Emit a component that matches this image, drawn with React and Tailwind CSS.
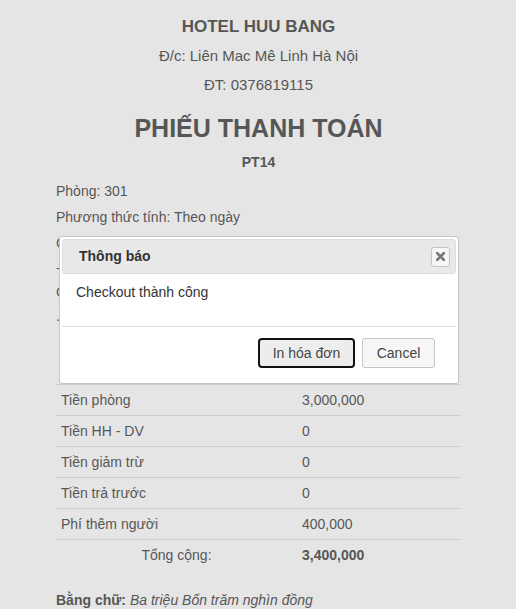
import React from 'react';

const rows = [
    { label: 'Tiền phòng', value: '3,000,000' },
    { label: 'Tiền HH - DV', value: '0' },
    { label: 'Tiền giảm trừ', value: '0' },
    { label: 'Tiền trả trước', value: '0' },
    { label: 'Phí thêm người', value: '400,000' },
];

export default function App() {
    return (
        <div className="h-screen overflow-hidden bg-white text-[#333] font-['Liberation_Sans',Arial,sans-serif] text-[14px]">
            <div className="w-[405px] ml-[56px]">
                {/* Header */}
                <div className="text-center">
                    <h1 className="pt-[15px] h-[39px] leading-[24px] text-[17px] font-bold">HOTEL HUU BANG</h1>
                    <p className="mt-[5px] leading-[24px] text-[15px]">Đ/c: Liên Mac Mê Linh Hà Nội</p>
                    <p className="mt-[5px] leading-[24px] text-[15px]">ĐT: 0376819115</p>
                    <h2 className="mt-[16px] leading-[30px] text-[25px] font-bold">PHIẾU THANH TOÁN</h2>
                    <p className="mt-[9px] leading-[20px] font-bold">PT14</p>
                </div>

                {/* Info */}
                <div className="mt-[6px]">
                    <p className="leading-[26px]">Phòng: 301</p>
                    <p className="leading-[26px]">Phương thức tính: Theo ngày</p>
                    <p className="leading-[26px]">Giờ vào: 10:00 01/05/2023</p>
                    <p className="leading-[24px]">- Thời gian ở: 3 ngày</p>
                    <p className="leading-[24px]">Giờ ra: 10:00 04/05/2023</p>
                    <p className="leading-[24px]">. Số người: 3</p>
                </div>

                {/* Table */}
                <table className="mt-[56px] w-full border-collapse">
                    <tbody>
                        {rows.map((r) => (
                            <tr key={r.label} className="border-t border-[#ddd]">
                                <td className="w-[241px] px-[5px] py-[5px] leading-[20px]">{r.label}</td>
                                <td className="px-[5px] py-[5px] leading-[20px]">{r.value}</td>
                            </tr>
                        ))}
                        <tr className="border-t border-[#ddd]">
                            <td className="w-[241px] px-[5px] py-[5px] leading-[20px] text-center">Tổng cộng:</td>
                            <td className="px-[5px] py-[5px] leading-[20px] font-bold">3,400,000</td>
                        </tr>
                    </tbody>
                </table>

                <p className="mt-[20px] leading-[20px]">
                    <b>Bằng chữ:</b> <i>Ba triệu Bốn trăm nghìn đồng</i>
                </p>
            </div>

            {/* Overlay */}
            <div className="fixed inset-0 bg-[#aaaaaa] opacity-30" />

            {/* Dialog */}
            <div className="fixed left-[59px] top-[236px] w-[400px] bg-white border border-[#c5c5c5] rounded-[3px] p-[2px]">
                <div className="h-[35px] flex items-center justify-between bg-[#e9e9e9] border border-[#dddddd] rounded-[3px] pl-[16px] pr-[5px]">
                    <span className="font-bold text-[#333]">Thông báo</span>
                    <button className="w-[19px] h-[20px] flex items-center justify-center bg-[#f6f6f6] border border-[#c5c5c5] rounded-[3px]">
                        <svg width="9" height="9" viewBox="0 0 9 9">
                            <path d="M1 1 L8 8 M8 1 L1 8" stroke="#777" strokeWidth="2.6" strokeLinecap="square" />
                        </svg>
                    </button>
                </div>
                <div className="pl-[14px] pt-[8px] pb-[24px] leading-[20px] text-[#333]">Checkout thành công</div>
                <div className="border-t border-[#dddddd] pt-[11px] pb-[13px] pr-[21px] flex justify-end gap-[7px]">
                    <button className="h-[30px] w-[97px] border-2 border-[#111] rounded-[4px] bg-[#ededed] text-[#454545]">In hóa đơn</button>
                    <button className="h-[30px] w-[73px] border border-[#c5c5c5] rounded-[3px] bg-[#f6f6f6] text-[#454545]">Cancel</button>
                </div>
            </div>
        </div>
    );
}
